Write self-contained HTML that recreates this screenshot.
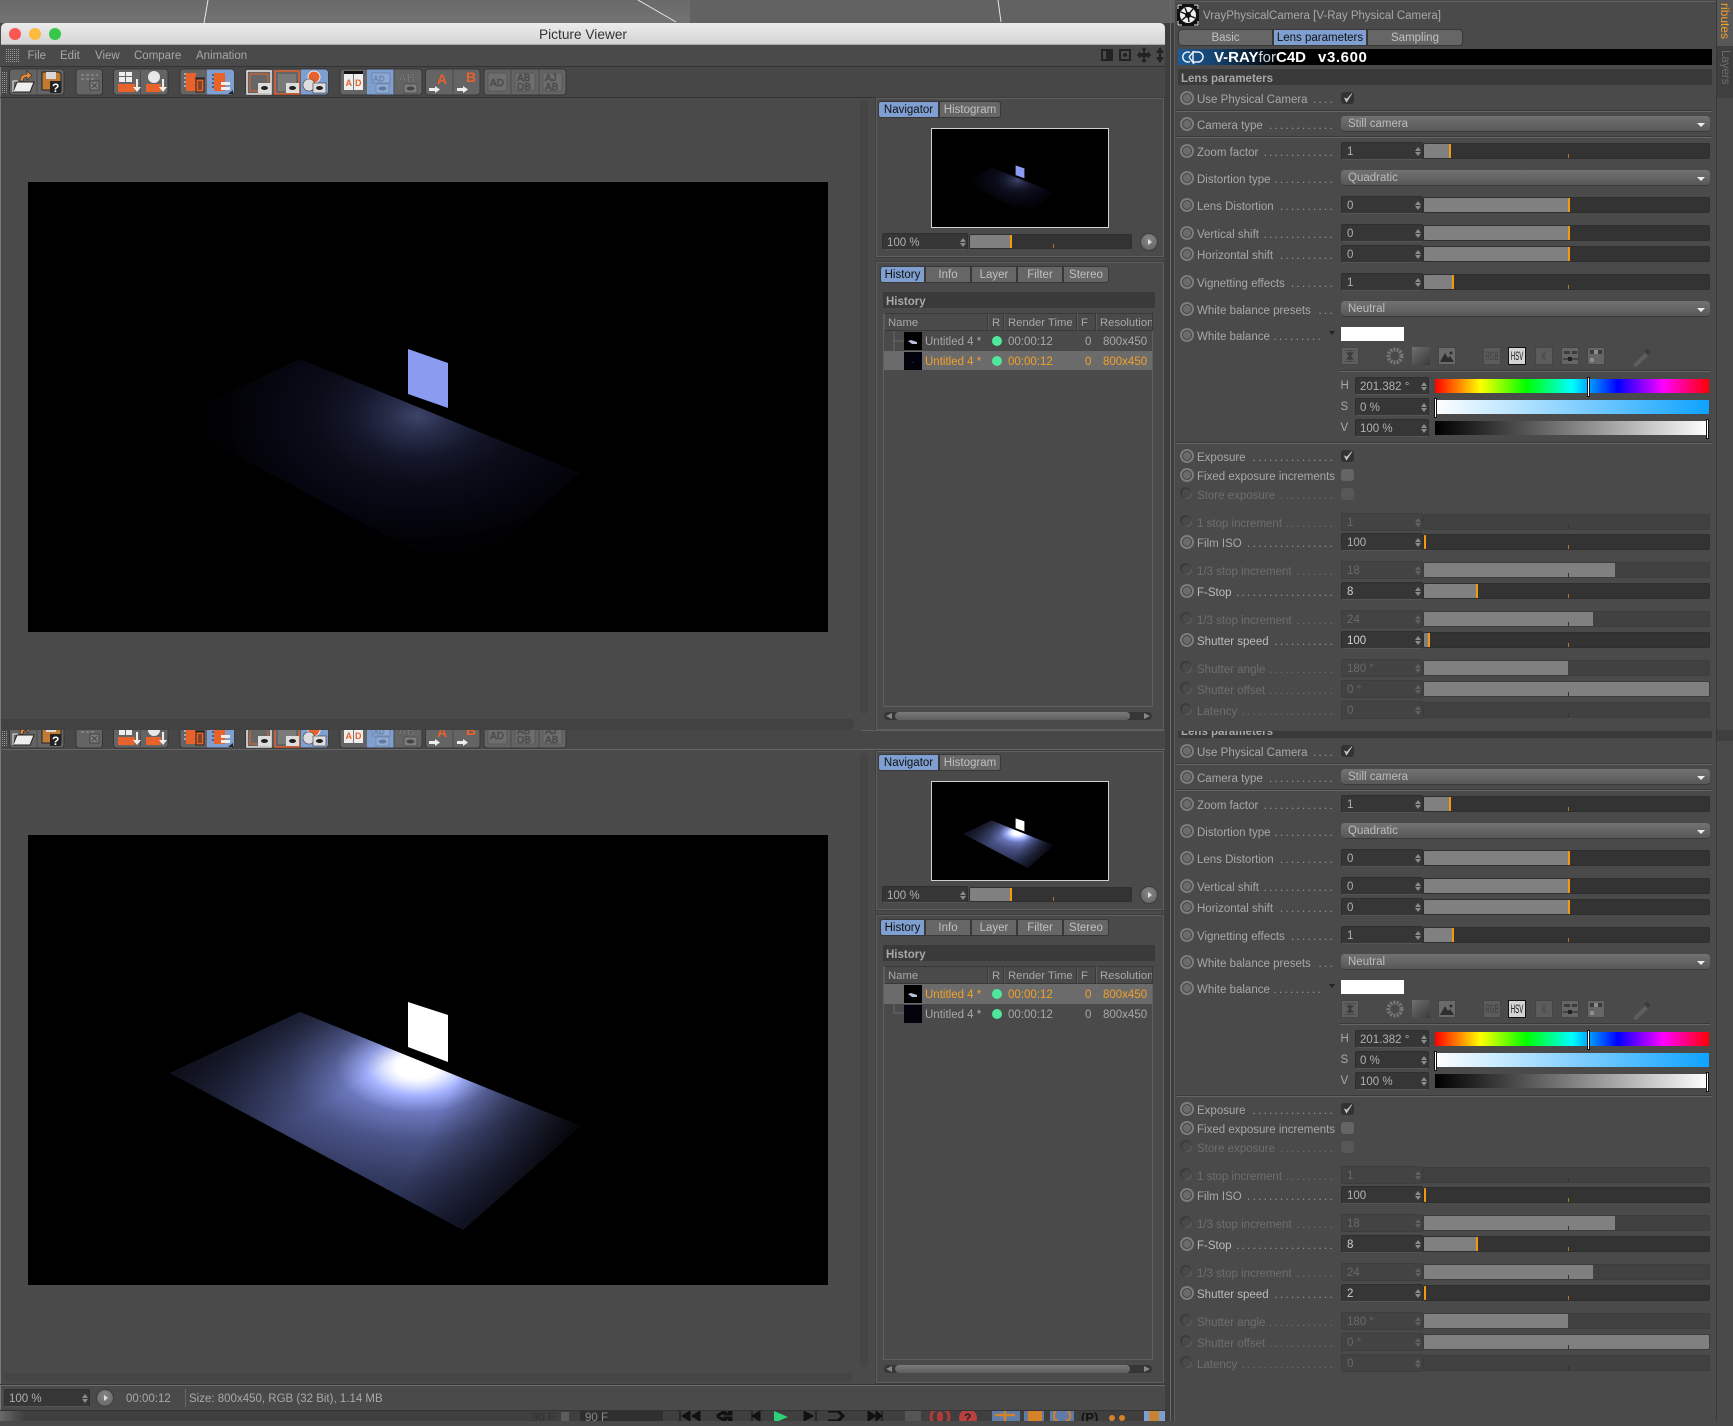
<!DOCTYPE html>
<html><head><meta charset="utf-8"><title>Picture Viewer</title>
<style>
html,body{margin:0;padding:0;background:#4a4a4a}
body{position:relative;width:1733px;height:1421px;overflow:hidden;font:11.5px/16px "Liberation Sans",sans-serif;color:#a8a8a8;filter:blur(.3px)}
div,span,svg{position:absolute;display:block;box-sizing:border-box}
.t{white-space:nowrap}
.panel{left:876px;width:288px;border:1px solid #5f5f5f;box-shadow:0 0 0 1px #3d3d3d}
.tab{height:17px;background:#666;border:1px solid #383838;text-align:center;line-height:16px;color:#c0c0c0}
.tab.on{background:#7f9fd0;color:#111}
.fld{background:#363636;border:1px solid #2f2f2f;border-bottom-color:#555;border-radius:2px;padding-left:5px;line-height:18px;color:#b0b0b0}
.fld::before,.fld::after{content:"";position:absolute;right:1px;width:0;height:0;border-left:3px solid transparent;border-right:3px solid transparent}
.fld::before{top:4px;border-bottom:4px solid #8c8c8c}
.fld::after{top:9px;border-top:4px solid #8c8c8c}
.hsv+.fld{padding-left:4px}
.sl{background:#333;border:1px solid #2f2f2f;border-radius:2px;overflow:hidden}
.fill{left:0;top:0;bottom:0;background:#808080}
.m{top:0;bottom:0;width:2px;background:#f09a10}
.tk{bottom:0;width:1px;height:4px;background:#a87a2a}
.rbtn{width:18px;height:18px;border-radius:50%;background:radial-gradient(circle at 50% 35%,#888,#5e5e5e);border:1px solid #3c3c3c}
.rbtn::after{content:"";position:absolute;left:7px;top:5px;width:0;height:0;border-left:4px solid #ddd;border-top:3px solid transparent;border-bottom:3px solid transparent}
.h{background:#3a3a3a;font-weight:bold;color:#a8a8a8;padding-left:3px;line-height:20px}
.c{color:#a8a8a8;white-space:nowrap;line-height:21px}
.o{color:#f2a02a}
.dot{width:10px;height:10px;border-radius:50%;background:#4fe89b}
.th{background:#000;height:18px;width:18px;left:904px}
.hc{top:313px;height:18px;background:#4a4a4a;border:1px solid #383838;border-left-color:#5c5c5c;line-height:19px;padding-left:3px;white-space:nowrap;overflow:hidden;font-size:11.3px}
.r{left:0;width:540px;height:20px}
.rb{left:6px;top:3px;width:14px;height:14px;border-radius:50%;background:#6b6b6b;border:2px solid #7d7d7d;box-shadow:inset 0 0 0 1px #404040}
.lb{left:23px;top:1.5px;width:138px;height:20px;line-height:20px;display:flex;color:#a8a8a8;white-space:nowrap;position:absolute}
.lb b{font-weight:normal;position:static;flex:none}
.lb i{font-style:normal;flex:1;overflow:hidden;direction:rtl;letter-spacing:2.3px;margin-left:4px;color:#999;text-align:right}
.lb i::after{content:"................................"}
.hi .lb{color:#bcbcbc}
.hi .fld{color:#d0d0d0}
.dis .lb,.dis .lb i{color:#6e6e6e}
.dis .rb{background:#4a4a4a;border:0;width:9px;height:9px;left:8px;top:5px;box-shadow:-1px -1px 0 1px #3c3c3c,1px 1px 0 0 #5c5c5c}
.dis .fld{background:#434343;border-color:#3e3e3e;color:#6a6a6a}
.dis .fld::before{border-bottom-color:#616161}
.dis .fld::after{border-top-color:#616161}
.dis .sl{background:#414141;border-color:#3d3d3d}
.dis .tk{background:#333}
.f{left:167px;top:1px;width:82px;height:18px}
.s{left:249px;top:2px;width:287px;height:16px}
.dd{left:167px;top:2px;width:369px;height:16px;border-radius:4px;background:linear-gradient(#727272,#585858);border-bottom:1px solid #3a3a3a;padding-left:7px;line-height:17px;color:#bcbcbc}
.dd::after{content:"";position:absolute;right:5px;top:7px;width:0;height:0;border-left:4px solid transparent;border-right:4px solid transparent;border-top:4px solid #eee}
.cb{left:167px;top:4px;width:13px;height:12px;background:#333;border-radius:3px}
.cb svg{left:1px;top:0}
.cb.e{background:#656565}
.ln{left:2px;width:536px;height:1px;background:#666;box-shadow:0 -1px 0 #3a3a3a}
.ib{width:18px;height:18px;background:#5c5c5c;border:1px solid #454545;color:#3f3f3f;font:9px/16px "Liberation Sans",sans-serif;text-align:center;overflow:hidden}
.ib span{position:static;transform:scale(.68,1.3);white-space:nowrap;margin-left:-8px;width:32px;text-align:center}
.mk{top:-2px;height:18px;background:#fff;border:1px solid #111;box-sizing:content-box;width:1px}
.hsv{left:166.5px;width:15px;line-height:19px;color:#a8a8a8}
</style></head><body>

<!-- backdrop -->
<div style="left:0;top:0;width:690px;height:23px;background:linear-gradient(#6a6a6a,#737373)"></div>
<div style="left:690px;top:0;width:484px;height:23px;background:#626262"></div>
<svg style="left:0;top:0" width="1174" height="24"><path d="M208 0L204 23M638 0L676 22M998 0L1001 22" stroke="#e6e6e6" stroke-width="1" fill="none"/></svg>

<!-- between window & attributes -->
<div style="left:1165px;top:23px;width:9px;height:1398px;background:#3e3e3e"></div>
<div style="left:1170px;top:0;width:1px;height:1421px;background:#6a6a6a"></div>

<!-- Title bar -->
<div style="left:1px;top:23px;width:1164px;height:22px;background:linear-gradient(#ececec,#d4d4d4);border-radius:5px 5px 0 0;border-bottom:1px solid #aaa"></div>
<div style="left:9px;top:28px;width:12px;height:12px;border-radius:50%;background:#fc5753"></div>
<div style="left:29px;top:28px;width:12px;height:12px;border-radius:50%;background:#fdbc40"></div>
<div style="left:49px;top:28px;width:12px;height:12px;border-radius:50%;background:#34c749"></div>
<div class="t" style="left:539px;top:27px;font-size:13.7px;color:#333">Picture Viewer</div>

<!-- main bg -->
<div style="left:1px;top:45px;width:1164px;height:1365px;background:#4a4a4a"></div>
<div style="left:0;top:66px;width:1px;height:1344px;background:#7a7a7a"></div>

<!-- menu -->
<svg style="left:6px;top:49px" width="13" height="13"><defs><pattern id="gr" width="2" height="2" patternUnits="userSpaceOnUse"><rect width="1" height="1" fill="#9a9a9a"/></pattern></defs><rect width="13" height="13" fill="url(#gr)"/></svg>
<div class="t" style="left:27.5px;top:48px;color:#a8a8a8">File</div>
<div class="t" style="left:60px;top:48px;color:#a8a8a8">Edit</div>
<div class="t" style="left:95px;top:48px;color:#a8a8a8">View</div>
<div class="t" style="left:134px;top:48px;color:#a8a8a8">Compare</div>
<div class="t" style="left:196px;top:48px;color:#a8a8a8">Animation</div>
<svg style="left:1098px;top:46px" width="68" height="18"><g fill="#222"><path d="M3 3h12v12H3zM5 5v8h3V5z" fill-rule="evenodd"/><path d="M21 3h12v12H21zM23 5v8h8V5z" fill-rule="evenodd"/><path d="M25 8h4v2h-4zM26 7h2v4h-2z"/><path d="M46 1l3 3h-2v3h3V5l3 4-3 4v-2h-3v3h2l-3 3-3-3h2v-3h-3v2l-3-4 3-4v2h3V4h-2z"/><path d="M62 1l4 6h-3v4h3l-4 6-4-6h3V7h-3z"/></g></svg>

<!-- ==================== PANE A ==================== -->
<div style="left:0;top:66px;width:1165px;height:1px;background:#333"></div>
<div style="left:1px;top:67px;width:1164px;height:30px;background:#474747"></div>
<div style="left:0;top:97px;width:1165px;height:1px;background:#333"></div>

<svg style="left:0;top:66px" width="600" height="32" font-family="Liberation Sans,sans-serif" font-weight="bold">
<rect x="2" y="6" width="5" height="21" fill="url(#gr)"/>
<g fill="#646464" stroke="#363636"><rect x="9.5" y="3" width="54.5" height="26" rx="3"/><rect x="76" y="3" width="26.5" height="26" rx="3"/><rect x="113.5" y="3" width="54.5" height="26" rx="3"/><rect x="180" y="3" width="54" height="26" rx="3"/><rect x="245.5" y="3" width="82.5" height="26" rx="3"/><rect x="340" y="3" width="82" height="26" rx="3"/><rect x="425.5" y="3" width="54.5" height="26" rx="3"/><rect x="484" y="3" width="82" height="26" rx="3"/></g>
<g fill="#7f9fd0"><path d="M207 3.500h24a3 3 0 0 1 3 3v19a3 3 0 0 1-3 3h-24zM301 3.500h24a3 3 0 0 1 3 3v19a3 3 0 0 1-3 3h-24zM367 3.500h27v25h-27z"/></g>
<path d="M37 3v26M140.500 3v26M273 3v26M394 3v26M453 3v26M511 3v26M539 3v26" stroke="#4a4a4a"/>
<path d="M13 26l4-10h17l-4 10z" fill="#eee" stroke="#222"/><path d="M13 26v-11h5" fill="none" stroke="#eee"/><path d="M20 15c0-5 3-7 7-7V5l5 4.500-5 4.500v-3c-2 0-4 1-4 4z" fill="#e8893a" stroke="#222" stroke-width=".6"/>
<path d="M42 6h17l2 2v16H42z" fill="#c47a32" stroke="#222"/><rect x="46" y="6" width="10" height="7" fill="#d8d8d8"/><rect x="50" y="15" width="11" height="12" fill="#222"/><text x="52" y="26" font-size="12" fill="#fff">?</text>
<path d="M81 8h3v2h-3zM86 8h3v2h-3zM91 8h3v2h-3zM96 8h2v2h-2zM81 12h3v2h-3zM86 12h3v2h-3zM91 12h3v2h-3z" fill="#7e7e7e"/><rect x="90" y="15" width="9" height="9" fill="#7e7e7e" stroke="#444"/><path d="M92 17l5 5M97 17l-5 5" stroke="#444"/>
<path d="M119 6h6v4h-6zM126 6h6v4h-6zM119 11h6v5h-6zM126 11h6v5h-6z" fill="#eee"/><rect x="118" y="18" width="17" height="8" fill="#e8622c"/><path d="M136 13h2v8h3l-4 5-4-5h3z" fill="#eee"/>
<circle cx="154" cy="11" r="6" fill="#e8e8e8"/><rect x="146" y="18" width="15" height="8" fill="#e8622c"/><path d="M162 13h2v8h3l-4 5-4-5h3z" fill="#eee"/>
<path d="M186 7h10v18h-10z" fill="#e8622c"/><path d="M184 8h2M184 12h2M184 16h2M184 20h2" stroke="#eee"/><path d="M196 13h8v13h-8zM195 12h10" stroke="#222" fill="#e8622c"/><path d="M199 15v9M201 15v9" stroke="#222"/>
<path d="M214 7h11v18h-11z" fill="#e8622c"/><path d="M212 9h2M212 13h2M212 17h2M212 21h2" stroke="#222"/><rect x="221" y="16" width="9" height="3" fill="#eee"/><rect x="221" y="21" width="9" height="3" fill="#eee"/><path d="M233 24v4h-5z" fill="#222"/>
<rect x="247" y="5" width="24" height="23" fill="none" stroke="#eee" stroke-width="1.400"/><rect x="250" y="8" width="18" height="17" fill="#666" stroke="#e8622c"/><rect x="258" y="17" width="13" height="10" fill="#ddd"/><ellipse cx="264.500" cy="22" rx="3.500" ry="2" fill="#222"/>
<rect x="275" y="5" width="24" height="23" fill="none" stroke="#e8622c" stroke-width="1.400"/><rect x="278" y="8" width="18" height="17" fill="#7a7a7a"/><rect x="286" y="17" width="13" height="10" fill="#ddd"/><ellipse cx="292.500" cy="22" rx="3.500" ry="2" fill="#222"/>
<circle cx="314" cy="11" r="6" fill="#e8622c" stroke="#eee"/><circle cx="309" cy="19" r="6" fill="#ddd" stroke="#444" stroke-width=".6"/><rect x="313" y="17" width="13" height="10" fill="#ddd" stroke="#333" stroke-width=".6"/><ellipse cx="319.500" cy="22" rx="3.500" ry="2" fill="#222"/>
<rect x="344" y="5" width="19" height="3" fill="#111"/><rect x="344" y="8" width="19" height="16" fill="#eee"/><rect x="353" y="8" width="1" height="16" fill="#777"/><text x="345.500" y="20" font-size="9" fill="#e8622c">A</text><text x="355" y="20" font-size="9" fill="#e8622c">D</text>
<rect x="372" y="7" width="18" height="10" fill="#8fa9d2" stroke="#6b86b0"/><text x="373" y="15.500" font-size="8" fill="#7592c0" stroke="#5f79a3" stroke-width=".3">AD</text><rect x="376" y="18" width="13" height="9" fill="#93abd2" stroke="#6f89b2"/><ellipse cx="382.500" cy="22.500" rx="4" ry="2" fill="#5f79a3"/>
<text x="398" y="16" font-size="12" fill="#7a7a7a" stroke="#505050" stroke-width=".4">AB</text><rect x="404" y="18" width="13" height="9" fill="#7e7e7e" stroke="#505050"/><ellipse cx="410.500" cy="22.500" rx="4" ry="2" fill="#444"/>
<text x="437" y="18" font-size="14" fill="#e8622c">A</text><path d="M429 22h6v-2l5 3.500-5 3.500v-2h-6z" fill="#eee"/>
<text x="466" y="16" font-size="14" fill="#e8622c">B</text><path d="M457 22h6v-2l5 3.500-5 3.500v-2h-6z" fill="#eee"/>
<g fill="#6e6e6e" stroke="#484848" stroke-width=".5"><rect x="488" y="7" width="19" height="18" rx="1"/><rect x="515" y="7" width="20" height="18" rx="1"/><rect x="543" y="7" width="19" height="18" rx="1"/></g>
<g font-size="10" font-weight="normal" fill="none" stroke="#444" stroke-width=".6"><text x="490" y="20">AD</text><text x="517" y="15">AB</text><text x="517" y="24">DB</text><text x="545" y="15">AJ</text><text x="545" y="24">AB</text></g>
</svg>

<!-- image A -->
<div style="left:860px;top:100px;width:8px;height:614px;background:#454545;border-radius:4px"></div>
<svg style="left:28px;top:182px" width="800" height="450" viewBox="0 0 800 450">
<defs>
<radialGradient id="g1" gradientUnits="userSpaceOnUse" cx="0" cy="0" r="1" gradientTransform="translate(390 234) scale(230 150)"><stop offset="0" stop-color="#3c4469"/><stop offset=".12" stop-color="#282d4a"/><stop offset=".28" stop-color="#14172a"/><stop offset=".45" stop-color="#0b0c18"/><stop offset=".65" stop-color="#050610"/><stop offset=".85" stop-color="#020205"/><stop offset="1" stop-color="#000"/></radialGradient>
<radialGradient id="g2" gradientUnits="userSpaceOnUse" cx="0" cy="0" r="1" gradientTransform="translate(389 232) scale(300 170)"><stop offset="0" stop-color="#fff"/><stop offset=".07" stop-color="#fff"/><stop offset=".11" stop-color="#dfe5ff"/><stop offset=".17" stop-color="#a3b1ff"/><stop offset=".27" stop-color="#6a76ba"/><stop offset=".43" stop-color="#4a5488"/><stop offset=".66" stop-color="#333a60"/><stop offset="1" stop-color="#1a1e38"/></radialGradient>
<linearGradient id="g3" gradientUnits="userSpaceOnUse" x1="272" y1="170" x2="322" y2="252"><stop offset="0" stop-color="#000" stop-opacity=".65"/><stop offset="1" stop-color="#000" stop-opacity="0"/></linearGradient>
<linearGradient id="g4" gradientUnits="userSpaceOnUse" x1="430" y1="240" x2="552" y2="300"><stop offset="0" stop-color="#000" stop-opacity="0"/><stop offset="1" stop-color="#000" stop-opacity=".95"/></linearGradient>
</defs>
<rect width="800" height="450" fill="#000"/>
<polygon points="272,177 142,238 435,395 552,291" fill="url(#g1)"/>
<polygon points="380,167 420,181 420,226 380,212" fill="#8a9bf0"/>
</svg>

<!-- Nav A -->
<div class="panel" style="top:98px;height:159px"></div>
<div class="tab on" style="left:878px;top:101px;width:61px;border-radius:3px 0 0 3px">Navigator</div>
<div class="tab" style="left:939px;top:101px;width:62px;border-radius:0 3px 3px 0">Histogram</div>
<div style="left:931px;top:128px;width:178px;height:100px;border:1px solid #d0d0d0;background:#000"></div>
<svg style="left:932px;top:129px" width="176" height="98" viewBox="0 0 800 450" preserveAspectRatio="none"><polygon points="272,177 142,238 435,395 552,291" fill="url(#g1)"/><polygon points="380,167 420,181 420,226 380,212" fill="#8a9bf0"/></svg>
<div class="fld" style="left:882px;top:233px;width:86px;height:17px;padding-left:4px">100 %</div>
<div class="sl" style="left:969px;top:234px;width:163px;height:15px"><div class="fill" style="width:41px"></div><div class="m" style="left:40px"></div><div class="tk" style="left:83px"></div></div>
<div class="rbtn" style="left:1140px;top:233px"></div>

<!-- History A -->
<div class="panel" style="top:262px;height:468px"></div>
<div class="tab on" style="left:880px;top:266px;width:45px;border-radius:3px 0 0 3px">History</div>
<div class="tab" style="left:925px;top:266px;width:46px">Info</div>
<div class="tab" style="left:971px;top:266px;width:46px">Layer</div>
<div class="tab" style="left:1017px;top:266px;width:46px">Filter</div>
<div class="tab" style="left:1063px;top:266px;width:46px;border-radius:0 3px 3px 0">Stereo</div>
<div class="h" style="left:883px;top:292px;width:272px;height:16px;overflow:hidden">History</div>
<div style="left:883px;top:313px;width:270px;height:394px;border:1px solid #5f5f5f"></div>
<div class="hc" style="left:884px;width:104px">Name</div>
<div class="hc" style="left:988px;width:16px">R</div>
<div class="hc" style="left:1004px;width:73px">Render Time</div>
<div class="hc" style="left:1077px;width:19px">F</div>
<div class="hc" style="left:1096px;width:57px">Resolution</div>
<div style="left:884px;top:351px;width:268px;height:19px;background:#6b6b6b"></div>
<svg style="left:886px;top:331px" width="20" height="40"><path d="M8 0v29h10M8 10h10" stroke="#6a6a6a" fill="none"/></svg>
<div class="th" style="top:332px"><svg style="left:4px;top:8px" width="10" height="5"><path d="M0 1l3-1 6 2v2l-5 0z" fill="#b9c0dc"/></svg></div>
<div class="th" style="top:352px;background:#02020c"><div style="left:8px;top:10px;width:2px;height:1px;background:#223"></div></div>
<div class="c" style="left:925px;top:332px">Untitled 4 *</div><div class="dot" style="left:992px;top:336px"></div><div class="c" style="left:1008px;top:332px">00:00:12</div><div class="c" style="left:1085px;top:332px">0</div><div class="c" style="left:1103px;top:332px">800x450</div>
<div class="c o" style="left:925px;top:352px">Untitled 4 *</div><div class="dot" style="left:992px;top:356px"></div><div class="c o" style="left:1008px;top:352px">00:00:12</div><div class="c o" style="left:1085px;top:352px">0</div><div class="c o" style="left:1103px;top:352px">800x450</div>
<div style="left:884px;top:712px;width:268px;height:8px;background:#363636;border-radius:4px"></div>
<div style="left:895px;top:712px;width:235px;height:8px;background:linear-gradient(#7a7a7a,#5e5e5e);border-radius:4px"></div>
<svg style="left:886px;top:712px" width="264" height="8"><path d="M0 4l6-3v6zM264 4l-6-3v6z" fill="#888"/></svg>

<!-- band between panes -->
<div style="left:1px;top:719px;width:853px;height:11px;background:#424242;border-radius:0 4px 4px 0"></div>
<div style="left:861px;top:730px;width:304px;height:1px;background:#5f5f5f"></div>
<div style="left:861px;top:731px;width:304px;height:17px;background:#474747"></div>

<!-- ==================== PANE B ==================== -->
<div style="left:1px;top:730px;width:860px;height:19px;background:#474747"></div>
<div style="left:0;top:749px;width:1165px;height:1px;background:#666"></div>
<div style="left:0;top:730px;width:1165px;height:20px;overflow:hidden">
<svg style="left:0;top:-11px" width="600" height="32" font-family="Liberation Sans,sans-serif" font-weight="bold">
<rect x="2" y="6" width="5" height="21" fill="url(#gr)"/>
<g fill="#646464" stroke="#363636"><rect x="9.5" y="3" width="54.5" height="26" rx="3"/><rect x="76" y="3" width="26.5" height="26" rx="3"/><rect x="113.5" y="3" width="54.5" height="26" rx="3"/><rect x="180" y="3" width="54" height="26" rx="3"/><rect x="245.5" y="3" width="82.5" height="26" rx="3"/><rect x="340" y="3" width="82" height="26" rx="3"/><rect x="425.5" y="3" width="54.5" height="26" rx="3"/><rect x="484" y="3" width="82" height="26" rx="3"/></g>
<g fill="#7f9fd0"><path d="M207 3.500h24a3 3 0 0 1 3 3v19a3 3 0 0 1-3 3h-24zM301 3.500h24a3 3 0 0 1 3 3v19a3 3 0 0 1-3 3h-24zM367 3.500h27v25h-27z"/></g>
<path d="M37 3v26M140.500 3v26M273 3v26M394 3v26M453 3v26M511 3v26M539 3v26" stroke="#4a4a4a"/>
<path d="M13 26l4-10h17l-4 10z" fill="#eee" stroke="#222"/><path d="M13 26v-11h5" fill="none" stroke="#eee"/><path d="M20 15c0-5 3-7 7-7V5l5 4.500-5 4.500v-3c-2 0-4 1-4 4z" fill="#e8893a" stroke="#222" stroke-width=".6"/>
<path d="M42 6h17l2 2v16H42z" fill="#c47a32" stroke="#222"/><rect x="46" y="6" width="10" height="7" fill="#d8d8d8"/><rect x="50" y="15" width="11" height="12" fill="#222"/><text x="52" y="26" font-size="12" fill="#fff">?</text>
<path d="M81 8h3v2h-3zM86 8h3v2h-3zM91 8h3v2h-3zM96 8h2v2h-2zM81 12h3v2h-3zM86 12h3v2h-3zM91 12h3v2h-3z" fill="#7e7e7e"/><rect x="90" y="15" width="9" height="9" fill="#7e7e7e" stroke="#444"/><path d="M92 17l5 5M97 17l-5 5" stroke="#444"/>
<path d="M119 6h6v4h-6zM126 6h6v4h-6zM119 11h6v5h-6zM126 11h6v5h-6z" fill="#eee"/><rect x="118" y="18" width="17" height="8" fill="#e8622c"/><path d="M136 13h2v8h3l-4 5-4-5h3z" fill="#eee"/>
<circle cx="154" cy="11" r="6" fill="#e8e8e8"/><rect x="146" y="18" width="15" height="8" fill="#e8622c"/><path d="M162 13h2v8h3l-4 5-4-5h3z" fill="#eee"/>
<path d="M186 7h10v18h-10z" fill="#e8622c"/><path d="M184 8h2M184 12h2M184 16h2M184 20h2" stroke="#eee"/><path d="M196 13h8v13h-8zM195 12h10" stroke="#222" fill="#e8622c"/><path d="M199 15v9M201 15v9" stroke="#222"/>
<path d="M214 7h11v18h-11z" fill="#e8622c"/><path d="M212 9h2M212 13h2M212 17h2M212 21h2" stroke="#222"/><rect x="221" y="16" width="9" height="3" fill="#eee"/><rect x="221" y="21" width="9" height="3" fill="#eee"/><path d="M233 24v4h-5z" fill="#222"/>
<rect x="247" y="5" width="24" height="23" fill="none" stroke="#eee" stroke-width="1.400"/><rect x="250" y="8" width="18" height="17" fill="#666" stroke="#e8622c"/><rect x="258" y="17" width="13" height="10" fill="#ddd"/><ellipse cx="264.500" cy="22" rx="3.500" ry="2" fill="#222"/>
<rect x="275" y="5" width="24" height="23" fill="none" stroke="#e8622c" stroke-width="1.400"/><rect x="278" y="8" width="18" height="17" fill="#7a7a7a"/><rect x="286" y="17" width="13" height="10" fill="#ddd"/><ellipse cx="292.500" cy="22" rx="3.500" ry="2" fill="#222"/>
<circle cx="314" cy="11" r="6" fill="#e8622c" stroke="#eee"/><circle cx="309" cy="19" r="6" fill="#ddd" stroke="#444" stroke-width=".6"/><rect x="313" y="17" width="13" height="10" fill="#ddd" stroke="#333" stroke-width=".6"/><ellipse cx="319.500" cy="22" rx="3.500" ry="2" fill="#222"/>
<rect x="344" y="5" width="19" height="3" fill="#111"/><rect x="344" y="8" width="19" height="16" fill="#eee"/><rect x="353" y="8" width="1" height="16" fill="#777"/><text x="345.500" y="20" font-size="9" fill="#e8622c">A</text><text x="355" y="20" font-size="9" fill="#e8622c">D</text>
<rect x="372" y="7" width="18" height="10" fill="#8fa9d2" stroke="#6b86b0"/><text x="373" y="15.500" font-size="8" fill="#7592c0" stroke="#5f79a3" stroke-width=".3">AD</text><rect x="376" y="18" width="13" height="9" fill="#93abd2" stroke="#6f89b2"/><ellipse cx="382.500" cy="22.500" rx="4" ry="2" fill="#5f79a3"/>
<text x="398" y="16" font-size="12" fill="#7a7a7a" stroke="#505050" stroke-width=".4">AB</text><rect x="404" y="18" width="13" height="9" fill="#7e7e7e" stroke="#505050"/><ellipse cx="410.500" cy="22.500" rx="4" ry="2" fill="#444"/>
<text x="437" y="18" font-size="14" fill="#e8622c">A</text><path d="M429 22h6v-2l5 3.500-5 3.500v-2h-6z" fill="#eee"/>
<text x="466" y="16" font-size="14" fill="#e8622c">B</text><path d="M457 22h6v-2l5 3.500-5 3.500v-2h-6z" fill="#eee"/>
<g fill="#6e6e6e" stroke="#484848" stroke-width=".5"><rect x="488" y="7" width="19" height="18" rx="1"/><rect x="515" y="7" width="20" height="18" rx="1"/><rect x="543" y="7" width="19" height="18" rx="1"/></g>
<g font-size="10" font-weight="normal" fill="none" stroke="#444" stroke-width=".6"><text x="490" y="20">AD</text><text x="517" y="15">AB</text><text x="517" y="24">DB</text><text x="545" y="15">AJ</text><text x="545" y="24">AB</text></g>
</svg>
</div>

<div style="left:860px;top:753px;width:8px;height:614px;background:#454545;border-radius:4px"></div>
<svg style="left:28px;top:835px" width="800" height="450" viewBox="0 0 800 450">
<rect width="800" height="450" fill="#000"/>
<polygon points="272,177 142,238 435,395 552,291" fill="url(#g2)"/>
<polygon points="272,177 142,238 435,395 552,291" fill="url(#g3)"/>
<polygon points="272,177 142,238 435,395 552,291" fill="url(#g4)"/>
<polygon points="380,167 420,180 420,227 380,212" fill="#fff"/>
</svg>

<!-- Nav B -->
<div class="panel" style="top:751px;height:159px"></div>
<div class="tab on" style="left:878px;top:754px;width:61px;border-radius:3px 0 0 3px">Navigator</div>
<div class="tab" style="left:939px;top:754px;width:62px;border-radius:0 3px 3px 0">Histogram</div>
<div style="left:931px;top:781px;width:178px;height:100px;border:1px solid #d0d0d0;background:#000"></div>
<svg style="left:932px;top:782px" width="176" height="98" viewBox="0 0 800 450" preserveAspectRatio="none"><polygon points="272,177 142,238 435,395 552,291" fill="url(#g2)"/><polygon points="272,177 142,238 435,395 552,291" fill="url(#g3)"/><polygon points="272,177 142,238 435,395 552,291" fill="url(#g4)"/><polygon points="380,167 420,180 420,227 380,212" fill="#fff"/></svg>
<div class="fld" style="left:882px;top:886px;width:86px;height:17px;padding-left:4px">100 %</div>
<div class="sl" style="left:969px;top:887px;width:163px;height:15px"><div class="fill" style="width:41px"></div><div class="m" style="left:40px"></div><div class="tk" style="left:83px"></div></div>
<div class="rbtn" style="left:1140px;top:886px"></div>

<!-- History B -->
<div class="panel" style="top:915px;height:468px"></div>
<div class="tab on" style="left:880px;top:919px;width:45px;border-radius:3px 0 0 3px">History</div>
<div class="tab" style="left:925px;top:919px;width:46px">Info</div>
<div class="tab" style="left:971px;top:919px;width:46px">Layer</div>
<div class="tab" style="left:1017px;top:919px;width:46px">Filter</div>
<div class="tab" style="left:1063px;top:919px;width:46px;border-radius:0 3px 3px 0">Stereo</div>
<div class="h" style="left:883px;top:945px;width:272px;height:16px;overflow:hidden">History</div>
<div style="left:883px;top:966px;width:270px;height:394px;border:1px solid #5f5f5f"></div>
<div class="hc" style="left:884px;width:104px;top:966px">Name</div>
<div class="hc" style="left:988px;width:16px;top:966px">R</div>
<div class="hc" style="left:1004px;width:73px;top:966px">Render Time</div>
<div class="hc" style="left:1077px;width:19px;top:966px">F</div>
<div class="hc" style="left:1096px;width:57px;top:966px">Resolution</div>
<div style="left:884px;top:984px;width:268px;height:20px;background:#6b6b6b"></div>
<svg style="left:886px;top:984px" width="20" height="40"><path d="M8 0v29h10M8 10h10" stroke="#6a6a6a" fill="none"/></svg>
<div class="th" style="top:985px"><svg style="left:4px;top:8px" width="10" height="5"><path d="M0 1l3-1 6 2v2l-5 0z" fill="#b9c0dc"/></svg></div>
<div class="th" style="top:1005px;background:#02020c"></div>
<div class="c o" style="left:925px;top:985px">Untitled 4 *</div><div class="dot" style="left:992px;top:989px"></div><div class="c o" style="left:1008px;top:985px">00:00:12</div><div class="c o" style="left:1085px;top:985px">0</div><div class="c o" style="left:1103px;top:985px">800x450</div>
<div class="c" style="left:925px;top:1005px">Untitled 4 *</div><div class="dot" style="left:992px;top:1009px"></div><div class="c" style="left:1008px;top:1005px">00:00:12</div><div class="c" style="left:1085px;top:1005px">0</div><div class="c" style="left:1103px;top:1005px">800x450</div>
<div style="left:884px;top:1365px;width:268px;height:8px;background:#363636;border-radius:4px"></div>
<div style="left:895px;top:1365px;width:235px;height:8px;background:linear-gradient(#7a7a7a,#5e5e5e);border-radius:4px"></div>
<svg style="left:886px;top:1365px" width="264" height="8"><path d="M0 4l6-3v6zM264 4l-6-3v6z" fill="#888"/></svg>
<div style="left:3px;top:1373px;width:850px;height:9px;background:#454545;border-radius:4px"></div>

<!-- status -->
<div style="left:0;top:1385px;width:1165px;height:1px;background:#6c6c6c;box-shadow:0 -1px 0 #383838"></div>
<div class="fld" style="left:4px;top:1389px;width:86px;height:18px;padding-left:4px">100 %</div>
<div class="rbtn" style="left:96px;top:1389px"></div>
<div class="t" style="left:126px;top:1391px">00:00:12</div>
<div style="left:185px;top:1389px;width:1px;height:18px;background:#666"></div>
<div class="t" style="left:189px;top:1391px">Size: 800x450, RGB (32 Bit), 1.14 MB</div>

<!-- timeline behind -->
<div style="left:0;top:1410px;width:1165px;height:11px;background:#3f3f3f;border-top:1px solid #333"></div>
<div style="left:0;top:1411px;width:24px;height:10px;background:linear-gradient(90deg,#6a6a6a,#3f3f3f)"></div>
<div class="t" style="left:532px;top:1410px;color:#333">90 F</div>
<div style="left:561px;top:1412px;width:8px;height:9px;background:#5c5c5c"></div>
<div style="left:580px;top:1411px;width:83px;height:10px;background:#2f2f2f"></div>
<div class="t" style="left:585px;top:1410px;color:#888">90 F</div>
<svg style="left:670px;top:1411px" width="495" height="10">
<path d="M10 0v10M30 0l-8 5 8 5zM20 0l-8 5 8 5z" fill="#111" stroke="#111"/>
<path d="M47 5l8-5v3h6V0h-3M47 5l8 5v-3h6v3h-3" fill="none" stroke="#111" stroke-width="3"/>
<path d="M90 0l-8 5 8 5zM82 0v10" fill="#111" stroke="#111"/>
<path d="M104 0l14 6-14 6z" fill="#2ecf78"/>
<path d="M134 0l9 5-9 5zM146 0v10" fill="#111" stroke="#111"/>
<path d="M158 0h10l5 5-5 5h-10" fill="none" stroke="#111" stroke-width="3"/>
<path d="M198 0l8 5-8 5zM206 0l6 5-6 5v-10zM212 0v10" fill="#111" stroke="#111"/>
<rect x="235" width="16" height="10" fill="#555"/>
<ellipse cx="270" cy="6" rx="9" ry="9" fill="none" stroke="#b43a3a" stroke-width="3"/><ellipse cx="270" cy="6" rx="3" ry="6" fill="#b43a3a"/>
<circle cx="298" cy="7" r="9" fill="#b84040"/><text x="294" y="11" font-size="12" font-weight="bold" fill="#222" font-family="Liberation Sans,sans-serif">?</text>
<rect x="322" width="28" height="10" fill="#5f7ba6"/><path d="M335 0v10M325 4h20" stroke="#d68228" stroke-width="2.500"/>
<rect x="354" width="20" height="10" fill="#5f7ba6"/><rect x="358" y="0" width="14" height="10" fill="#d68228"/>
<rect x="380" width="24" height="10" fill="#5f7ba6"/><path d="M386 0c-4 5-2 9 2 10M398 0c4 5 2 9-2 10" fill="none" stroke="#d68228" stroke-width="2"/>
<text x="411" y="11" font-size="13" font-weight="bold" fill="#111" font-family="Liberation Sans,sans-serif">(P)</text>
<circle cx="442" cy="7" r="3" fill="#d68228"/><circle cx="452" cy="7" r="3" fill="#d68228"/>
<rect x="474" width="21" height="10" fill="#7f9fd0"/><rect x="479" width="10" height="10" fill="#c88434"/>
</svg>

<!-- ==================== ATTRIBUTES ==================== -->
<div style="left:1174px;top:0;width:559px;height:1421px;background:#4a4a4a"></div>
<div style="left:1174px;top:1px;width:542px;height:1px;background:#5e5e5e"></div>
<div style="left:1174px;top:0;width:1px;height:1421px;background:#5e5e5e"></div>
<div style="left:1716px;top:0;width:1px;height:1421px;background:#383838"></div>
<div style="left:1717px;top:0;width:16px;height:46px;background:#575757"></div>
<div class="t" style="left:1717px;top:-1px;width:16px;height:40px;writing-mode:vertical-rl;text-align:right;color:#f2a02a;line-height:16px;font-size:12px">ributes</div>
<div style="left:1717px;top:46px;width:16px;height:52px;background:#3f3f3f"></div>
<div class="t" style="left:1717px;top:50px;writing-mode:vertical-rl;color:#6c6c6c;line-height:16px">Layers</div>
<div style="left:1717px;top:730px;width:16px;height:11px;background:#3f3f3f"></div>

<svg style="left:1177px;top:4px" width="22" height="22" viewBox="0 0 22 22"><rect width="22" height="22" fill="#111"/><path d="M1 5V1h4M17 1h4v4M21 17v4h-4M5 21H1v-4" stroke="#eee" fill="none"/><circle cx="11" cy="11" r="8" fill="#eee"/><path d="M11 11L8 4M11 11L4 8M11 11L5 16M11 11L12 18M11 11L18 14M11 11L16 5" stroke="#111" stroke-width="1.400"/><circle cx="11" cy="11" r="3" fill="#111"/></svg>
<div class="t" style="left:1203px;top:8px;color:#a8a8a8;font-size:11.5px">VrayPhysicalCamera [V-Ray Physical Camera]</div>
<div class="tab" style="left:1178px;top:29px;width:95px;border-radius:4px 0 0 4px">Basic</div>
<div class="tab on" style="left:1273px;top:29px;width:94px">Lens parameters</div>
<div class="tab" style="left:1367px;top:29px;width:96px;border-radius:0 4px 4px 0">Sampling</div>
<div style="left:1178px;top:49px;width:534px;height:16px;background:linear-gradient(90deg,#1b5c98,#14406a 40px,#000 100px)"></div>
<svg style="left:1179px;top:49px" width="30" height="16"><g fill="none" stroke="#e8eef5" stroke-width="1.500"><path d="M11 3.500a5 5 0 1 0 0 9"/><path d="M14 3h5a5 5 0 0 1 0 10h-5z"/><path d="M10 8l5-6M10 8l5 7"/></g></svg>
<div class="t" style="left:1214px;top:50px;font:bold 15px/16px 'Liberation Sans',sans-serif;color:#fff">V-RAY<span style="position:static;display:inline;font-weight:normal;color:#cfd6de">for</span>C4D</div>
<div class="t" style="left:1318px;top:50px;font:bold 15px/16px 'Liberation Sans',sans-serif;color:#fff;letter-spacing:.6px">v3.600</div>

<!-- container A -->
<div style="left:1174px;top:0;width:542px;height:731px;overflow:hidden">
<div class="h" style="left:4px;top:69px;width:534px;height:16px;overflow:hidden">Lens parameters</div>
<div class="r" style="top:88px"><div class="rb"></div><div class="lb"><b>Use Physical Camera</b><i></i></div><div class="cb"><svg width="12" height="12"><path d="M2.500 6l2 4L10 1.500 5 7z" fill="#c8c8c8" stroke="#c8c8c8" stroke-width=".6"/></svg></div></div>
<div class="ln" style="top:111px"></div>
<div class="r" style="top:114px"><div class="rb"></div><div class="lb"><b>Camera type</b><i></i></div><div class="dd">Still camera</div></div>
<div class="ln" style="top:137px"></div>
<div class="r" style="top:141px"><div class="rb"></div><div class="lb"><b>Zoom factor</b><i></i></div><div class="fld f">1</div><div class="sl s"><div class="fill" style="width:25px"></div><div class="m" style="left:25px"></div><div class="tk" style="left:144px"></div></div></div>
<div class="r" style="top:168px"><div class="rb"></div><div class="lb"><b>Distortion type</b><i></i></div><div class="dd">Quadratic</div></div>
<div class="r" style="top:195px"><div class="rb"></div><div class="lb"><b>Lens Distortion</b><i></i></div><div class="fld f">0</div><div class="sl s"><div class="fill" style="width:144px"></div><div class="m" style="left:144px"></div></div></div>
<div class="r" style="top:223px"><div class="rb"></div><div class="lb"><b>Vertical shift</b><i></i></div><div class="fld f">0</div><div class="sl s"><div class="fill" style="width:144px"></div><div class="m" style="left:144px"></div></div></div>
<div class="r" style="top:244px"><div class="rb"></div><div class="lb"><b>Horizontal shift</b><i></i></div><div class="fld f">0</div><div class="sl s"><div class="fill" style="width:144px"></div><div class="m" style="left:144px"></div></div></div>
<div class="r" style="top:272px"><div class="rb"></div><div class="lb"><b>Vignetting effects</b><i></i></div><div class="fld f">1</div><div class="sl s"><div class="fill" style="width:28px"></div><div class="m" style="left:28px"></div><div class="tk" style="left:144px"></div></div></div>
<div class="r" style="top:299px"><div class="rb"></div><div class="lb"><b>White balance presets</b><i></i></div><div class="dd">Neutral</div></div>
<div class="r" style="top:325px"><div class="rb"></div><div class="lb" style="width:126px"><b>White balance</b><i></i></div></div>
<div style="left:155px;top:331px;width:0;height:0;border-left:3px solid transparent;border-right:3px solid transparent;border-top:4px solid #222"></div>
<div style="left:166.500px;top:327px;width:63px;height:14px;background:#fff"></div>
<div class="ib" style="left:166.500px;top:347px;background:#5f5f5f"><svg style="left:2px;top:2px" width="12" height="12"><path d="M0 0h12M0 12h12M6 1v10M3 3h6L6 6zM3 9h6L6 6z" stroke="#3a3a3a" fill="#3a3a3a"/></svg></div>
<div class="ib" style="left:212px;top:347px;background:none;border:0"><svg style="left:0;top:0" width="18" height="18"><circle cx="9" cy="9" r="6.500" fill="none" stroke="#787878" stroke-width="4" stroke-dasharray="2 1.200"/></svg></div>
<div class="ib" style="left:238px;top:347px;background:linear-gradient(135deg,#707070,#3a3a3a);border:0"></div>
<div class="ib" style="left:263.500px;top:347px;background:#6a6a6a"><svg style="left:1px;top:2px" width="14" height="13"><path d="M0 12l5-9 3 5 2-2 4 6z" fill="#2e2e2e"/><circle cx="11" cy="3" r="1.500" fill="#2e2e2e"/></svg></div>
<div class="ib" style="left:309px;top:347px"><span>RGB</span></div>
<div class="ib" style="left:334px;top:347px;background:#d4d4d4;color:#111;border-color:#111"><span>HSV</span></div>
<div class="ib" style="left:361px;top:347px"><span>K</span></div>
<div class="ib" style="left:387px;top:347px;background:#666"><svg style="left:1px;top:2px" width="15" height="13"><path d="M0 9h15" stroke="#222"/><path d="M1 1h6v3H1zM9 1h5v3H9z" fill="#3c3c3c"/><rect x="5" y="7" width="4" height="4" fill="#222"/></svg></div>
<div class="ib" style="left:412.500px;top:347px;background:#666"><svg style="left:1px;top:1px" width="15" height="15"><path d="M1 1h4v4H1zM9 1h4v4H9z" fill="#3c3c3c"/><path d="M5 1h4v4H5zM1 9h4v4H1z" fill="#8c8c8c"/></svg></div>
<svg style="left:457px;top:346px" width="21" height="21"><path d="M2 19l12-12 3 3L5 21z" fill="#5f5f5f"/><path d="M13 5l3-3 4 4-3 3z" fill="#3c3c3c"/></svg>
<div style="left:166px;top:371px;width:370px;height:1px;background:#666;box-shadow:0 -1px 0 #3a3a3a"></div>

<div class="hsv" style="top:377px">H</div><div class="fld" style="left:181px;top:377px;width:74px;height:18px">201.382 °</div>
<div style="left:260.600px;top:379px;width:274px;height:14px;background:linear-gradient(90deg,#f00,#ff0 16.67%,#0f0 33.33%,#0ff 50%,#00f 66.67%,#f0f 83.33%,#f00)"></div><div class="mk" style="left:413px;top:377px"></div>
<div class="hsv" style="top:398px">S</div><div class="fld" style="left:181px;top:398px;width:74px;height:18px">0 %</div>
<div style="left:260.600px;top:400px;width:274px;height:14px;background:linear-gradient(90deg,#fff,#0ea2ff)"></div><div class="mk" style="left:260px;top:398px"></div>
<div class="hsv" style="top:419px">V</div><div class="fld" style="left:181px;top:419px;width:74px;height:18px">100 %</div>
<div style="left:260.600px;top:421px;width:274px;height:14px;background:linear-gradient(90deg,#000,#fff)"></div><div class="mk" style="left:532px;top:419px"></div>
<div class="ln" style="top:443px"></div>

<div class="r" style="top:446px"><div class="rb"></div><div class="lb"><b>Exposure</b><i></i></div><div class="cb"><svg width="12" height="12"><path d="M2.500 6l2 4L10 1.500 5 7z" fill="#c8c8c8" stroke="#c8c8c8" stroke-width=".6"/></svg></div></div>
<div class="r" style="top:465px"><div class="rb"></div><div class="lb"><b>Fixed exposure increments</b></div><div class="cb e"></div></div>
<div class="r dis" style="top:484px"><div class="rb"></div><div class="lb"><b>Store exposure</b><i></i></div><div class="cb e" style="background:#575757"></div></div>
<div class="r dis" style="top:512px"><div class="rb"></div><div class="lb"><b>1 stop increment</b><i></i></div><div class="fld f">1</div><div class="sl s"><div class="tk" style="left:144px"></div></div></div>
<div class="r" style="top:532px"><div class="rb"></div><div class="lb"><b>Film ISO</b><i></i></div><div class="fld f">100</div><div class="sl s"><div class="m" style="left:0"></div><div class="tk" style="left:144px"></div></div></div>
<div class="r dis" style="top:560px"><div class="rb"></div><div class="lb"><b>1/3 stop increment</b><i></i></div><div class="fld f">18</div><div class="sl s"><div class="fill" style="width:191px"></div><div class="tk" style="left:144px"></div></div></div>
<div class="r hi" style="top:581px"><div class="rb"></div><div class="lb"><b>F-Stop</b><i></i></div><div class="fld f">8</div><div class="sl s"><div class="fill" style="width:52px"></div><div class="m" style="left:52px"></div><div class="tk" style="left:144px"></div></div></div>
<div class="r dis" style="top:609px"><div class="rb"></div><div class="lb"><b>1/3 stop increment</b><i></i></div><div class="fld f">24</div><div class="sl s"><div class="fill" style="width:169px"></div><div class="tk" style="left:144px"></div></div></div>
<div class="r hi" style="top:630px"><div class="rb"></div><div class="lb"><b>Shutter speed</b><i></i></div><div class="fld f">100</div><div class="sl s"><div class="fill" style="width:4px"></div><div class="m" style="left:4px"></div><div class="tk" style="left:144px"></div></div></div>
<div class="r dis" style="top:658px"><div class="rb"></div><div class="lb"><b>Shutter angle</b><i></i></div><div class="fld f">180 °</div><div class="sl s"><div class="fill" style="width:144px"></div></div></div>
<div class="r dis" style="top:679px"><div class="rb"></div><div class="lb"><b>Shutter offset</b><i></i></div><div class="fld f">0 °</div><div class="sl s"><div class="fill" style="width:287px"></div><div class="tk" style="left:144px"></div></div></div>
<div class="r dis" style="top:700px"><div class="rb"></div><div class="lb"><b>Latency</b><i></i></div><div class="fld f">0</div><div class="sl s"><div class="tk" style="left:144px"></div></div></div>
</div>

<!-- container B -->
<div style="left:1174px;top:731px;width:542px;height:690px;overflow:hidden">
<div style="left:0;top:-78px;width:542px;height:768px">
<div class="h" style="left:4px;top:69px;width:534px;height:16px;overflow:hidden">Lens parameters</div>
<div class="r" style="top:88px"><div class="rb"></div><div class="lb"><b>Use Physical Camera</b><i></i></div><div class="cb"><svg width="12" height="12"><path d="M2.500 6l2 4L10 1.500 5 7z" fill="#c8c8c8" stroke="#c8c8c8" stroke-width=".6"/></svg></div></div>
<div class="ln" style="top:111px"></div>
<div class="r" style="top:114px"><div class="rb"></div><div class="lb"><b>Camera type</b><i></i></div><div class="dd">Still camera</div></div>
<div class="ln" style="top:137px"></div>
<div class="r" style="top:141px"><div class="rb"></div><div class="lb"><b>Zoom factor</b><i></i></div><div class="fld f">1</div><div class="sl s"><div class="fill" style="width:25px"></div><div class="m" style="left:25px"></div><div class="tk" style="left:144px"></div></div></div>
<div class="r" style="top:168px"><div class="rb"></div><div class="lb"><b>Distortion type</b><i></i></div><div class="dd">Quadratic</div></div>
<div class="r" style="top:195px"><div class="rb"></div><div class="lb"><b>Lens Distortion</b><i></i></div><div class="fld f">0</div><div class="sl s"><div class="fill" style="width:144px"></div><div class="m" style="left:144px"></div></div></div>
<div class="r" style="top:223px"><div class="rb"></div><div class="lb"><b>Vertical shift</b><i></i></div><div class="fld f">0</div><div class="sl s"><div class="fill" style="width:144px"></div><div class="m" style="left:144px"></div></div></div>
<div class="r" style="top:244px"><div class="rb"></div><div class="lb"><b>Horizontal shift</b><i></i></div><div class="fld f">0</div><div class="sl s"><div class="fill" style="width:144px"></div><div class="m" style="left:144px"></div></div></div>
<div class="r" style="top:272px"><div class="rb"></div><div class="lb"><b>Vignetting effects</b><i></i></div><div class="fld f">1</div><div class="sl s"><div class="fill" style="width:28px"></div><div class="m" style="left:28px"></div><div class="tk" style="left:144px"></div></div></div>
<div class="r" style="top:299px"><div class="rb"></div><div class="lb"><b>White balance presets</b><i></i></div><div class="dd">Neutral</div></div>
<div class="r" style="top:325px"><div class="rb"></div><div class="lb" style="width:126px"><b>White balance</b><i></i></div></div>
<div style="left:155px;top:331px;width:0;height:0;border-left:3px solid transparent;border-right:3px solid transparent;border-top:4px solid #222"></div>
<div style="left:166.500px;top:327px;width:63px;height:14px;background:#fff"></div>
<div class="ib" style="left:166.500px;top:347px;background:#5f5f5f"><svg style="left:2px;top:2px" width="12" height="12"><path d="M0 0h12M0 12h12M6 1v10M3 3h6L6 6zM3 9h6L6 6z" stroke="#3a3a3a" fill="#3a3a3a"/></svg></div>
<div class="ib" style="left:212px;top:347px;background:none;border:0"><svg style="left:0;top:0" width="18" height="18"><circle cx="9" cy="9" r="6.500" fill="none" stroke="#787878" stroke-width="4" stroke-dasharray="2 1.200"/></svg></div>
<div class="ib" style="left:238px;top:347px;background:linear-gradient(135deg,#707070,#3a3a3a);border:0"></div>
<div class="ib" style="left:263.500px;top:347px;background:#6a6a6a"><svg style="left:1px;top:2px" width="14" height="13"><path d="M0 12l5-9 3 5 2-2 4 6z" fill="#2e2e2e"/><circle cx="11" cy="3" r="1.500" fill="#2e2e2e"/></svg></div>
<div class="ib" style="left:309px;top:347px"><span>RGB</span></div>
<div class="ib" style="left:334px;top:347px;background:#d4d4d4;color:#111;border-color:#111"><span>HSV</span></div>
<div class="ib" style="left:361px;top:347px"><span>K</span></div>
<div class="ib" style="left:387px;top:347px;background:#666"><svg style="left:1px;top:2px" width="15" height="13"><path d="M0 9h15" stroke="#222"/><path d="M1 1h6v3H1zM9 1h5v3H9z" fill="#3c3c3c"/><rect x="5" y="7" width="4" height="4" fill="#222"/></svg></div>
<div class="ib" style="left:412.500px;top:347px;background:#666"><svg style="left:1px;top:1px" width="15" height="15"><path d="M1 1h4v4H1zM9 1h4v4H9z" fill="#3c3c3c"/><path d="M5 1h4v4H5zM1 9h4v4H1z" fill="#8c8c8c"/></svg></div>
<svg style="left:457px;top:346px" width="21" height="21"><path d="M2 19l12-12 3 3L5 21z" fill="#5f5f5f"/><path d="M13 5l3-3 4 4-3 3z" fill="#3c3c3c"/></svg>
<div style="left:166px;top:371px;width:370px;height:1px;background:#666;box-shadow:0 -1px 0 #3a3a3a"></div>
<div class="hsv" style="top:377px">H</div><div class="fld" style="left:181px;top:377px;width:74px;height:18px">201.382 °</div>
<div style="left:260.600px;top:379px;width:274px;height:14px;background:linear-gradient(90deg,#f00,#ff0 16.67%,#0f0 33.33%,#0ff 50%,#00f 66.67%,#f0f 83.33%,#f00)"></div><div class="mk" style="left:413px;top:377px"></div>
<div class="hsv" style="top:398px">S</div><div class="fld" style="left:181px;top:398px;width:74px;height:18px">0 %</div>
<div style="left:260.600px;top:400px;width:274px;height:14px;background:linear-gradient(90deg,#fff,#0ea2ff)"></div><div class="mk" style="left:260px;top:398px"></div>
<div class="hsv" style="top:419px">V</div><div class="fld" style="left:181px;top:419px;width:74px;height:18px">100 %</div>
<div style="left:260.600px;top:421px;width:274px;height:14px;background:linear-gradient(90deg,#000,#fff)"></div><div class="mk" style="left:532px;top:419px"></div>
<div class="ln" style="top:443px"></div>
<div class="r" style="top:446px"><div class="rb"></div><div class="lb"><b>Exposure</b><i></i></div><div class="cb"><svg width="12" height="12"><path d="M2.500 6l2 4L10 1.500 5 7z" fill="#c8c8c8" stroke="#c8c8c8" stroke-width=".6"/></svg></div></div>
<div class="r" style="top:465px"><div class="rb"></div><div class="lb"><b>Fixed exposure increments</b></div><div class="cb e"></div></div>
<div class="r dis" style="top:484px"><div class="rb"></div><div class="lb"><b>Store exposure</b><i></i></div><div class="cb e" style="background:#575757"></div></div>
<div class="r dis" style="top:512px"><div class="rb"></div><div class="lb"><b>1 stop increment</b><i></i></div><div class="fld f">1</div><div class="sl s"><div class="tk" style="left:144px"></div></div></div>
<div class="r" style="top:532px"><div class="rb"></div><div class="lb"><b>Film ISO</b><i></i></div><div class="fld f">100</div><div class="sl s"><div class="m" style="left:0"></div><div class="tk" style="left:144px"></div></div></div>
<div class="r dis" style="top:560px"><div class="rb"></div><div class="lb"><b>1/3 stop increment</b><i></i></div><div class="fld f">18</div><div class="sl s"><div class="fill" style="width:191px"></div><div class="tk" style="left:144px"></div></div></div>
<div class="r hi" style="top:581px"><div class="rb"></div><div class="lb"><b>F-Stop</b><i></i></div><div class="fld f">8</div><div class="sl s"><div class="fill" style="width:52px"></div><div class="m" style="left:52px"></div><div class="tk" style="left:144px"></div></div></div>
<div class="r dis" style="top:609px"><div class="rb"></div><div class="lb"><b>1/3 stop increment</b><i></i></div><div class="fld f">24</div><div class="sl s"><div class="fill" style="width:169px"></div><div class="tk" style="left:144px"></div></div></div>
<div class="r hi" style="top:630px"><div class="rb"></div><div class="lb"><b>Shutter speed</b><i></i></div><div class="fld f">2</div><div class="sl s"><div class="m" style="left:0"></div><div class="tk" style="left:144px"></div></div></div>
<div class="r dis" style="top:658px"><div class="rb"></div><div class="lb"><b>Shutter angle</b><i></i></div><div class="fld f">180 °</div><div class="sl s"><div class="fill" style="width:144px"></div></div></div>
<div class="r dis" style="top:679px"><div class="rb"></div><div class="lb"><b>Shutter offset</b><i></i></div><div class="fld f">0 °</div><div class="sl s"><div class="fill" style="width:287px"></div><div class="tk" style="left:144px"></div></div></div>
<div class="r dis" style="top:700px"><div class="rb"></div><div class="lb"><b>Latency</b><i></i></div><div class="fld f">0</div><div class="sl s"><div class="tk" style="left:144px"></div></div></div>
</div>
</div>
</body></html>
